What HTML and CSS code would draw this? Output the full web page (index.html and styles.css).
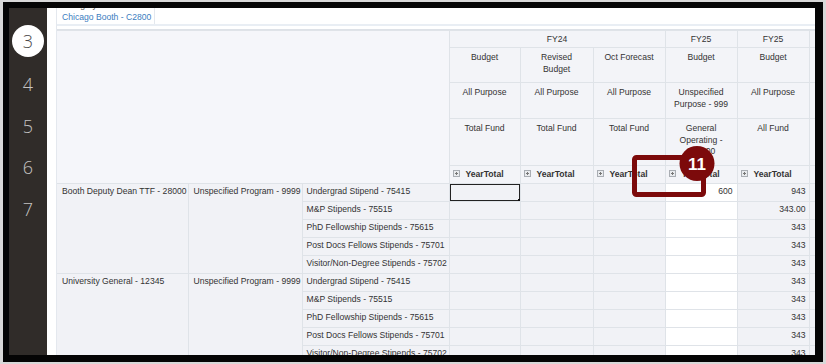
FILE: index.html
```html
<!DOCTYPE html>
<html>
<head>
<meta charset="utf-8">
<link rel="stylesheet" href="styles.css">
</head>
<body>
<div class="frame">
  <div class="app">
    <nav class="sidebar">
      <div class="step current"><span class="step-circle">3</span></div>
      <div class="step">4</div>
      <div class="step">5</div>
      <div class="step">6</div>
      <div class="step">7</div>
    </nav>
    <div class="strip"></div>
    <main class="main">
      <div class="topbar">
        <div class="pov">
          <div class="pov-label">Category</div>
          <a class="pov-link">Chicago Booth - C2800</a>
        </div>
      </div>
      <div class="grid-wrap">
        <table class="grid">
          <colgroup>
            <col class="c-ent"><col class="c-prog"><col class="c-acct">
            <col class="c-d1"><col class="c-d2"><col class="c-d3"><col class="c-d4"><col class="c-d5"><col class="c-d6">
          </colgroup>
          <thead>
            <tr class="h1">
              <th class="corner" colspan="3" rowspan="5"></th>
              <th colspan="3">FY24</th><th>FY25</th><th>FY25</th><th></th>
            </tr>
            <tr class="h2">
              <th>Budget</th><th>Revised Budget</th><th>Oct Forecast</th><th>Budget</th><th>Budget</th><th></th>
            </tr>
            <tr class="h3">
              <th>All Purpose</th><th>All Purpose</th><th>All Purpose</th><th>Unspecified Purpose - 999</th><th>All Purpose</th><th></th>
            </tr>
            <tr class="h4">
              <th>Total Fund</th><th>Total Fund</th><th>Total Fund</th><th>General Operating - 100000</th><th>All Fund</th><th></th>
            </tr>
            <tr class="h5">
              <th class="yt"><span class="exp"></span>YearTotal</th>
              <th class="yt"><span class="exp"></span>YearTotal</th>
              <th class="yt"><span class="exp"></span>YearTotal</th>
              <th class="yt"><span class="exp"></span>YearTotal</th>
              <th class="yt"><span class="exp"></span>YearTotal</th>
              <th></th>
            </tr>
          </thead>
          <tbody>
            <tr>
              <td class="lbl" rowspan="5">Booth Deputy Dean TTF - 28000</td>
              <td class="lbl" rowspan="5">Unspecified Program - 9999</td>
              <td class="lbl acct">Undergrad Stipend - 75415</td>
              <td class="selected"></td><td></td><td></td><td class="edit num">600</td><td class="num">943</td><td></td>
            </tr>
            <tr><td class="lbl acct">M&amp;P Stipends - 75515</td><td></td><td></td><td></td><td class="edit"></td><td class="num">343.00</td><td></td></tr>
            <tr><td class="lbl acct">PhD Fellowship Stipends - 75615</td><td></td><td></td><td></td><td class="edit"></td><td class="num">343</td><td></td></tr>
            <tr><td class="lbl acct">Post Docs Fellows Stipends - 75701</td><td></td><td></td><td></td><td class="edit"></td><td class="num">343</td><td></td></tr>
            <tr><td class="lbl acct">Visitor/Non-Degree Stipends - 75702</td><td></td><td></td><td></td><td class="edit"></td><td class="num">343</td><td></td></tr>
            <tr>
              <td class="lbl" rowspan="5">University General - 12345</td>
              <td class="lbl" rowspan="5">Unspecified Program - 9999</td>
              <td class="lbl acct">Undergrad Stipend - 75415</td>
              <td></td><td></td><td></td><td class="edit"></td><td class="num">343</td><td></td>
            </tr>
            <tr><td class="lbl acct">M&amp;P Stipends - 75515</td><td></td><td></td><td></td><td class="edit"></td><td class="num">343</td><td></td></tr>
            <tr><td class="lbl acct">PhD Fellowship Stipends - 75615</td><td></td><td></td><td></td><td class="edit"></td><td class="num">343</td><td></td></tr>
            <tr><td class="lbl acct">Post Docs Fellows Stipends - 75701</td><td></td><td></td><td></td><td class="edit"></td><td class="num">343</td><td></td></tr>
            <tr><td class="lbl acct">Visitor/Non-Degree Stipends - 75702</td><td></td><td></td><td></td><td class="edit"></td><td class="num">343</td><td></td></tr>
          </tbody>
        </table>
      </div>
    </main>
  </div>
  <svg class="callout" width="826" height="364" viewBox="0 0 826 364">
    <rect x="634.5" y="157.5" width="69" height="37" rx="2" fill="none" stroke="#7c0a0b" stroke-width="5"/>
    <circle cx="697" cy="163.5" r="17.5" fill="#7c0a0b"/>
    <text x="697" y="170" text-anchor="middle" class="callout-num">11</text>
  </svg>
</div>
</body>
</html>
```

FILE: styles.css
```css
html, body {
  margin: 0;
  padding: 0;
}
body {
  background: #d8d8d8;
  width: 826px;
  height: 364px;
  overflow: hidden;
  font-family: "Liberation Sans", Arial, sans-serif;
}
.frame {
  margin: 2px 0 0 3px;
  width: 820px;
  height: 360px;
  box-sizing: border-box;
  background: #050505;
  padding: 6px 8px 7px 6px;
  display: flex;
}
.app {
  flex: 1;
  display: flex;
  overflow: hidden;
  background: #fff;
}
.sidebar {
  width: 38px;
  flex: none;
  background: #302c29;
  padding-top: 12px;
  box-sizing: border-box;
}
.step {
  height: 41.5px;
  box-sizing: border-box;
  padding-top: 4px;
  display: flex;
  align-items: center;
  justify-content: center;
  font-family: "Open Sans", sans-serif;
  font-weight: 300;
  font-size: 18px;
  color: #c4c3c2;
}
.step.current {
  padding-top: 0;
}
.step-circle {
  width: 32px;
  height: 32px;
  border-radius: 50%;
  background: #fff;
  color: #4a4a4a;
  display: flex;
  align-items: center;
  justify-content: center;
}
.strip {
  width: 9px;
  flex: none;
  background: #fff;
}
.main {
  flex: 1;
  display: flex;
  flex-direction: column;
  overflow: hidden;
  background: #fff;
  border-left: 1px solid #e4e8ee;
}
.topbar {
  height: 16px;
  flex: none;
  border-bottom: 2px solid #e9eef4;
  display: flex;
}
.pov {
  width: 98px;
  border-right: 1px solid #e4e8ee;
  height: 16px;
  overflow: hidden;
  display: flex;
  flex-direction: column;
  justify-content: flex-end;
  padding-left: 5px;
  box-sizing: border-box;
  font-size: 8.6px;
}
.pov-label {
  color: #555;
  line-height: 11px;
  flex: none;
}
.pov-link {
  color: #3b7dc0;
  line-height: 12px;
  padding-bottom: 1px;
  flex: none;
}
.grid-wrap {
  flex: 1;
  overflow: hidden;
  margin-top: 3px;
  border-top: 1px solid #dde1e7;
}
.grid {
  border-collapse: collapse;
  table-layout: fixed;
  width: 770px;
  font-size: 8.6px;
  color: #333;
}
.c-ent { width: 131px; }
.c-prog { width: 114px; }
.c-acct { width: 147px; }
.c-d1 { width: 71px; }
.c-d2 { width: 73px; }
.c-d3 { width: 72px; }
.c-d4 { width: 72px; }
.c-d5 { width: 72px; }
.c-d6 { width: 18px; }
.grid th, .grid td {
  border: 1px solid #dfe3e8;
  padding: 0;
  overflow: hidden;
}
.grid th {
  background: #f3f4f8;
  font-weight: normal;
  text-align: center;
  vertical-align: top;
  line-height: 11.5px;
  padding: 3px 7px 0;
}
.grid th.corner {
  background: #f5f6fa;
  border-left: none;
}
.h1 th { height: 13px; }
.h2 th { height: 30px; }
.h3 th { height: 31px; }
.h4 th { height: 42px; }
.h4 th, .h3 th, .h2 th { padding-top: 4px; }
.h5 th {
  height: 14px;
  padding-top: 3px;
}
.grid th.yt {
  text-align: left;
  font-weight: bold;
  padding-left: 3px;
  padding-right: 0;
  white-space: nowrap;
}
.exp {
  display: inline-block;
  width: 5px;
  height: 5px;
  border: 1px solid #a9adb3;
  background: #e9ebee;
  margin-right: 6px;
  vertical-align: 0px;
  position: relative;
}
.exp::before {
  content: "";
  position: absolute;
  left: 1px;
  top: 2px;
  width: 3px;
  height: 1px;
  background: #777;
}
.exp::after {
  content: "";
  position: absolute;
  left: 2px;
  top: 1px;
  width: 1px;
  height: 3px;
  background: #777;
}
.grid td {
  background: #f1f2f6;
  height: 16px;
  vertical-align: top;
  line-height: 12px;
  padding-top: 1px;
  white-space: nowrap;
}
.grid td.lbl {
  padding-left: 5px;
  border-left: none;
}
.grid td.lbl.acct {
  padding-left: 4px;
  border-left: 1px solid #dfe3e8;
}
.grid td.edit {
  background: #fff;
}
.grid td.num {
  text-align: right;
  padding-right: 3px;
}
.grid td.edit.num {
  padding-right: 4px;
}
.grid td.selected {
  position: relative;
}
.grid td.selected::after {
  content: "";
  position: absolute;
  left: 0;
  top: 0;
  right: 0;
  bottom: 0;
  border: 1.5px solid #222;
}
.grid td.selected::before {
  content: "";
  position: absolute;
  right: -2px;
  bottom: -2px;
  width: 4px;
  height: 4px;
  background: #111;
  z-index: 2;
}
.callout {
  position: absolute;
  left: 0;
  top: 0;
  pointer-events: none;
}
.callout-num {
  fill: #fff;
  font-family: "Liberation Sans", Arial, sans-serif;
  font-weight: bold;
  font-size: 17px;
}
```
